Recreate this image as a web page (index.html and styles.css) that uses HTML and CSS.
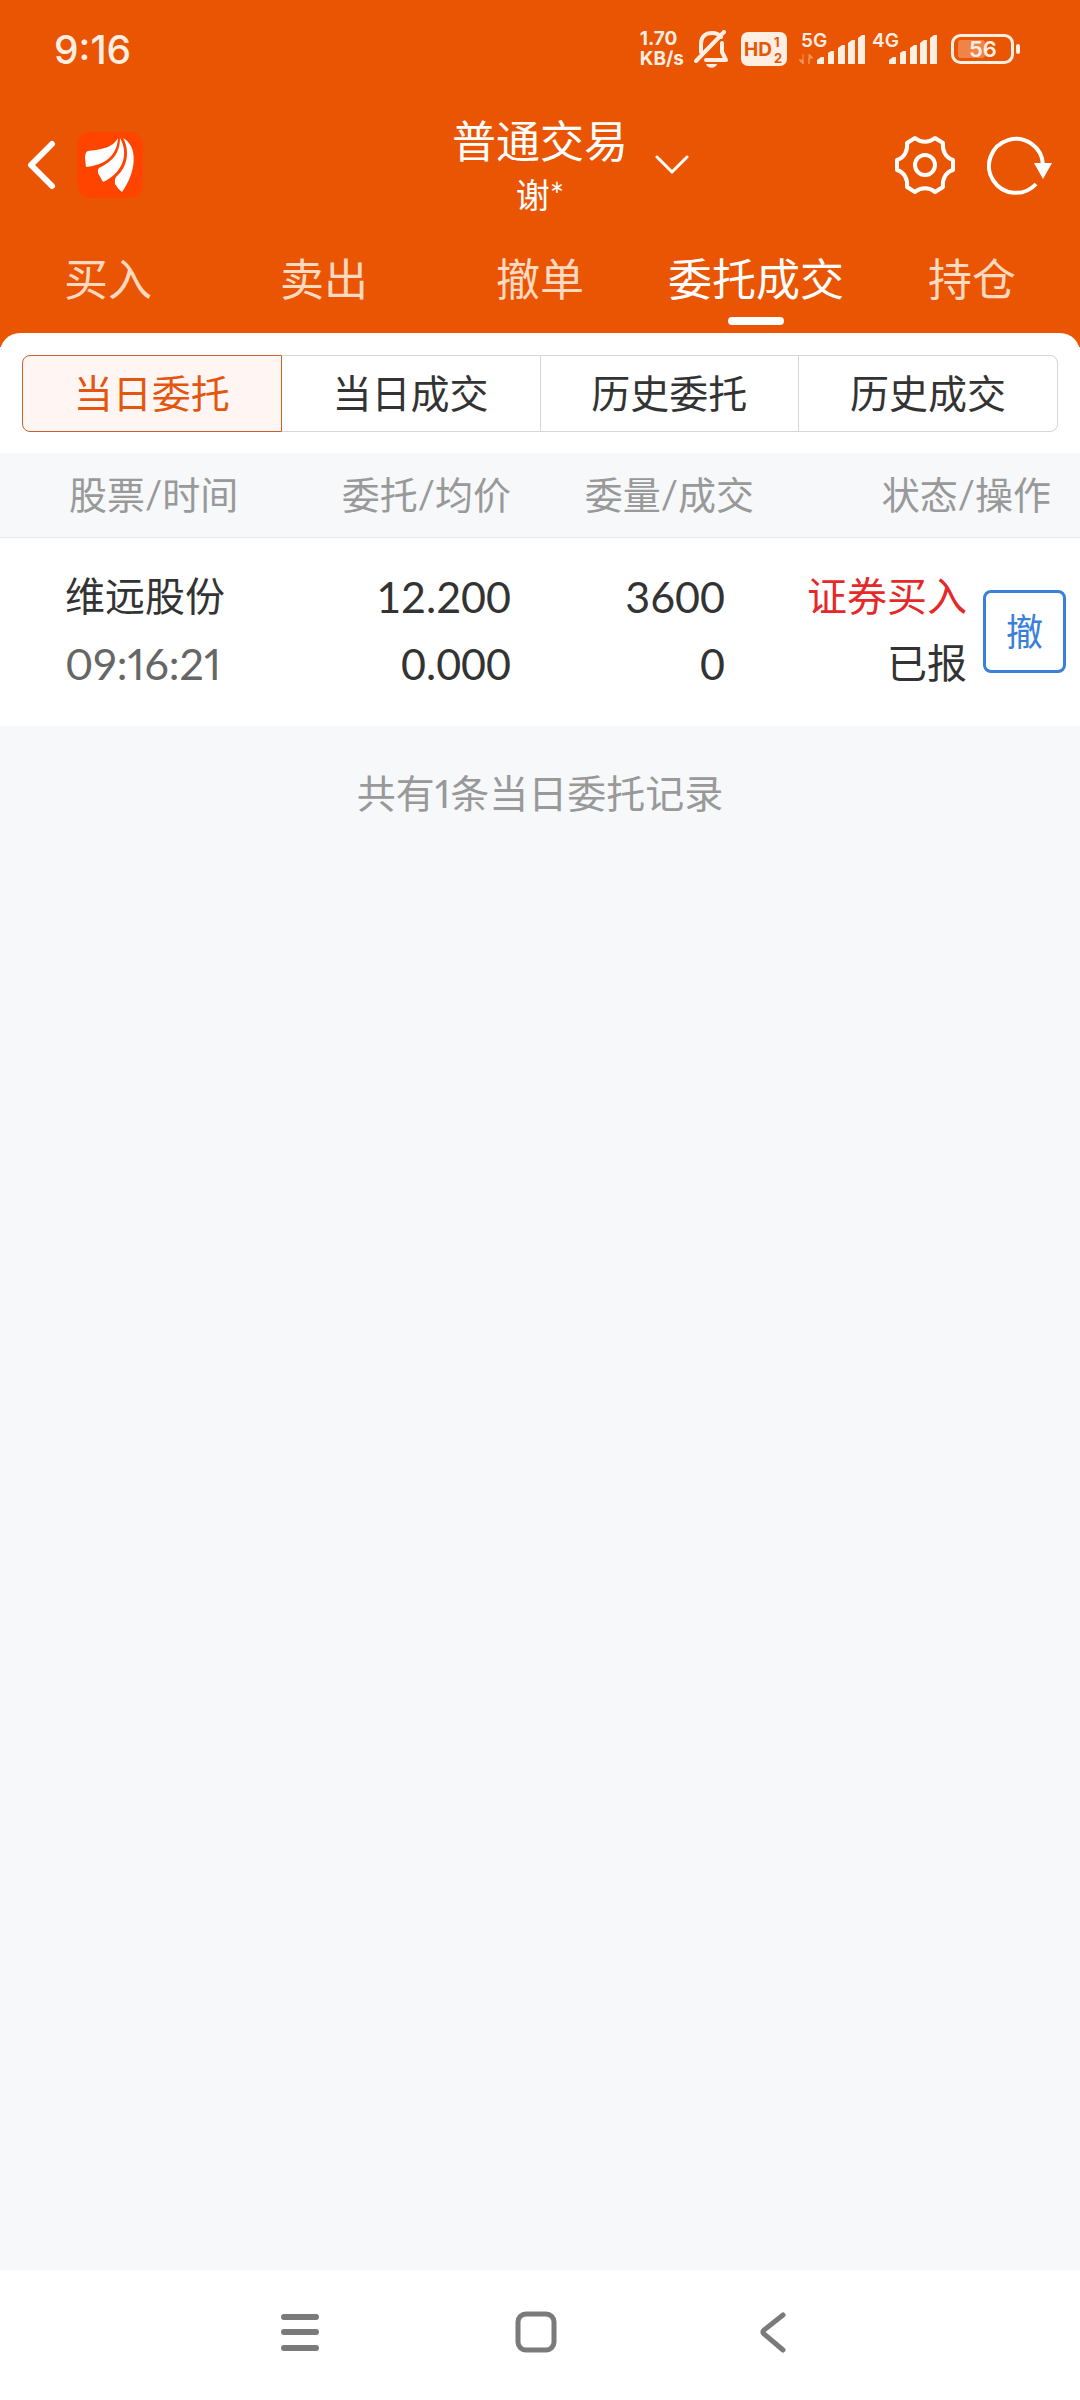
FILE: index.html
```html
<!DOCTYPE html>
<html lang="zh-CN">
<head>
  <meta charset="UTF-8" />
  <meta name="viewport" content="width=device-width, initial-scale=1.0" />
  <title>普通交易</title>
  <link rel="stylesheet" href="styles.css">
</head>
<body>

  <header class="top">
    <div class="status-bar">
      <span class="clock">9:16</span>
      <div class="status-icons">
        <div class="speed"><div>1.70</div><div>KB/s</div></div>
        <svg class="bell" width="34" height="38" viewBox="0 0 34 38" fill="none" stroke="currentColor" stroke-width="4">
          <path d="M7 22V14C7 6 12 3 18 3c4 0 7 1 9 4M28 13v9l4 8H12M2 31L30 2" stroke-linecap="round" stroke-linejoin="round"/>
          <path d="M12 34h11c-1 5-10 5-11 0z" fill="currentColor" stroke="none"/>
        </svg>
        <svg class="hd" width="46" height="34" viewBox="0 0 46 34">
          <rect width="46" height="34" rx="7" fill="currentColor"/>
          <text x="3" y="24" font-size="19">HD</text>
          <text x="33" y="15" font-size="13">1</text>
          <text x="33" y="31" font-size="13">2</text>
        </svg>
        <svg class="signal" width="66" height="46" viewBox="0 -6 66 46" fill="currentColor">
          <text x="2" y="15" font-size="19">5G</text>
          <path d="M4 22v10M4 32l-4-4h4zM10 32V22l4 4h-4z" stroke="currentColor" opacity=".4"/>
          <path d="M18 32v-4l4-3h3v7zM29 32V21l3-2h3v13zM39 32V16l4-3h3v19zM49 32V11l4-3h3v24zM59 32V6l4-3h3v29z"/>
        </svg>
        <svg class="signal" width="66" height="46" viewBox="0 -6 66 46" fill="currentColor">
          <text x="1" y="15" font-size="19">4G</text>
          <path d="M18 32v-4l4-3h3v7zM29 32V21l3-2h3v13zM39 32V16l4-3h3v19zM49 32V11l4-3h3v24zM59 32V6l4-3h3v29z"/>
        </svg>
        <svg class="battery" width="70" height="30" viewBox="0 0 70 30">
          <rect x="1.5" y="1.5" width="60" height="27" rx="8" fill="none" stroke="currentColor" stroke-width="3"/>
          <rect x="7" y="6" width="27" height="18" rx="3" fill="currentColor" opacity=".3"/>
          <rect x="65" y="10" width="4" height="10" rx="2" fill="currentColor"/>
          <text x="18" y="23" font-size="22" fill="currentColor">56</text>
        </svg>
      </div>
    </div>

    <div class="title-bar">
      <div class="title-left">
        <button class="icon-btn" aria-label="返回">
          <svg width="30" height="50" viewBox="0 0 30 50" fill="none" stroke="currentColor" stroke-width="6" stroke-linecap="round" stroke-linejoin="round">
            <path d="M25 4L4 25l21 21"/>
          </svg>
        </button>
        <svg width="66" height="66" viewBox="0 0 66 66">
          <rect width="66" height="66" rx="14" fill="#ff4400"/>
          <g fill="#fff">
            <path d="M41 6C36 14 30 17 11 19Q8 20 8 26L9 35C28 33 40 24 41 6Z"/>
            <path d="M43 6C43 20 37 29 22 36Q20 38 21 41L26 50C44 42 53 24 43 6Z"/>
            <path d="M46 6C53 18 51 35 39 45Q37 48 38 52Q41 57 45 60C60 39 61 14 46 6Z"/>
          </g>
        </svg>
      </div>
      <div class="title">
        <h1>普通交易</h1>
        <p>谢*</p>
      </div>
      <div class="title-right">
        <button class="icon-btn" aria-label="切换账户">
          <svg width="34" height="20" viewBox="0 0 34 20" fill="none" stroke="currentColor" stroke-width="3" stroke-linecap="round" stroke-linejoin="round">
            <path d="M2 2l15 15L32 2"/>
          </svg>
        </button>
        <div class="actions">
          <button class="icon-btn" aria-label="设置">
            <svg width="60" height="60" viewBox="0 0 60 60" fill="none" stroke="currentColor" stroke-width="4" stroke-linejoin="round">
              <path d="M20 3C26 8 34 8 40 3L48 8C47 16 51 23 58 25V35C51 37 47 44 48 52L40 57C34 52 26 52 20 57L12 52C13 44 9 37 2 35V25C9 23 13 16 12 8Z"/>
              <circle cx="30" cy="30" r="10"/>
            </svg>
          </button>
          <button class="icon-btn" aria-label="刷新">
            <svg width="66" height="60" viewBox="0 0 66 60" fill="none" stroke="currentColor" stroke-width="4">
              <path d="M56 30A27 27 0 1 0 49 49"/>
              <path d="M47 28h18l-9 16z" fill="currentColor" stroke="none"/>
            </svg>
          </button>
        </div>
      </div>
    </div>

    <nav class="tabs">
      <a href="#">买入</a>
      <a href="#">卖出</a>
      <a href="#">撤单</a>
      <a href="#" class="active">委托成交</a>
      <a href="#">持仓</a>
    </nav>
  </header>

  <main>
    <div class="panel">
      <div class="segments">
        <button class="active">当日委托</button>
        <button>当日成交</button>
        <button>历史委托</button>
        <button>历史成交</button>
      </div>
    </div>

    <table class="orders">
      <colgroup>
        <col class="col-name">
        <col class="col-price">
        <col class="col-qty">
        <col class="col-state">
        <col class="col-action">
      </colgroup>
      <thead>
        <tr>
          <th class="name">股票/时间</th>
          <th class="price">委托/均价</th>
          <th class="qty">委量/成交</th>
          <th class="state" colspan="2">状态/操作</th>
        </tr>
      </thead>
      <tbody>
        <tr>
          <td class="name"><div class="cjk">维远股份</div><div class="time">09:16:21</div></td>
          <td class="price"><div>12.200</div><div>0.000</div></td>
          <td class="qty"><div>3600</div><div>0</div></td>
          <td class="state"><div class="cjk buy">证券买入</div><div class="cjk">已报</div></td>
          <td class="action"><button class="cancel-btn">撤</button></td>
        </tr>
      </tbody>
    </table>

    <p class="summary">共有1条当日委托记录</p>
  </main>

  <footer class="system-nav">
    <button class="icon-btn" aria-label="菜单">
      <svg width="42" height="42" viewBox="0 0 42 42" fill="none" stroke="currentColor" stroke-width="6" stroke-linecap="round">
        <path d="M5 6h32M5 21h32M5 37h32"/>
      </svg>
    </button>
    <button class="icon-btn" aria-label="主页">
      <svg width="42" height="42" viewBox="0 0 42 42" fill="none" stroke="currentColor" stroke-width="5">
        <rect x="3" y="3" width="36" height="36" rx="8"/>
      </svg>
    </button>
    <button class="icon-btn" aria-label="返回">
      <svg width="42" height="42" viewBox="0 0 42 42" fill="none" stroke="currentColor" stroke-width="5" stroke-linecap="round">
        <path d="M32 4L13 19q-2 2 0 4L32 39"/>
      </svg>
    </button>
  </footer>

</body>
</html>
```
FILE: styles.css
```css
/* Global Styles */
* {
  box-sizing: border-box;
}
body {
  display: flex;
  flex-direction: column;
  min-height: 100vh;
  margin: 0;
  font-family: Lato, "Noto Sans CJK SC", sans-serif;
  background-color: #f6f8fa;
  color: #333;
}
h1, p {
  margin: 0;
  font-weight: 400;
}
button {
  font-family: inherit;
  cursor: pointer;
}
svg {
  display: block;
}
.icon-btn {
  padding: 0;
  border: none;
  background: none;
  color: inherit;
}

/* Header */
.top {
  background-color: #ea5504;
  color: #fff;
}
.status-bar {
  display: flex;
  justify-content: space-between;
  align-items: center;
  height: 98px;
  padding: 0 59px 0 54px;
  color: #ffeee2;
}
.clock {
  font-family: Inter, sans-serif;
  font-size: 39px;
  font-weight: 500;
}
.status-icons {
  display: flex;
  align-items: center;
  font-family: Inter, sans-serif;
}
.status-icons text {
  font-weight: 600;
}
.speed {
  font-size: 19px;
  font-weight: 700;
  line-height: 20px;
  margin-right: 10px;
}
.bell {
  margin-right: 13px;
}
.hd {
  margin-right: 12px;
}
.hd text {
  fill: #ea5504;
  font-weight: 700;
}
.signal {
  margin-right: 6px;
}
.signal + .battery {
  margin-left: 8px;
}

/* Title */
.title-bar {
  display: grid;
  grid-template-columns: 1fr auto 1fr;
  align-items: center;
  height: 134px;
}
.title-left {
  display: flex;
  align-items: center;
  gap: 20px;
  padding-left: 27px;
}
.title {
  text-align: center;
}
.title h1 {
  font-size: 44px;
  line-height: 60px;
}
.title p {
  font-size: 34px;
  line-height: 48px;
}
.title-right {
  display: flex;
  justify-content: space-between;
  align-items: center;
  padding: 0 27px;
}
.actions {
  display: flex;
  gap: 32px;
}

/* Tabs */
.tabs {
  display: flex;
}
.tabs a {
  flex: 1;
  display: flex;
  flex-direction: column;
  align-items: center;
  height: 101px;
  padding-top: 15px;
  color: #ffd9c0;
  font-size: 44px;
  line-height: 64px;
  text-decoration: none;
}
.tabs .active {
  color: #fff;
}
.tabs .active::after {
  content: "";
  width: 56px;
  height: 8px;
  margin-top: 6px;
  border-radius: 4px;
  background-color: #fff;
}

/* Segments */
main {
  flex: 1;
  background: linear-gradient(#ea5504 14px, #fff 14px, #fff 40px, #f6f8fa 40px);
}
.panel {
  padding: 22px 22px 21px;
  background-color: #fff;
  border-radius: 20px 20px 0 0;
}
.segments {
  display: flex;
}
.segments button {
  flex: 1;
  height: 77px;
  padding: 0 0 5px;
  border: 1px solid #d5d8da;
  border-left-width: 0;
  background-color: #fff;
  color: #333;
  font-size: 39px;
}
.segments button:first-child {
  border-left-width: 1px;
  border-radius: 8px 0 0 8px;
}
.segments button:last-child {
  border-radius: 0 8px 8px 0;
}
.segments .active {
  border-color: #c8602c;
  background-color: #fff5f2;
  color: #e2560f;
}

/* Orders */
.orders {
  width: 100%;
  table-layout: fixed;
  border-collapse: collapse;
  background-color: #fff;
}
.col-name, .col-price {
  width: 25%;
}
.col-qty, .col-state {
  width: 20%;
}
.col-action {
  width: 10%;
}
.orders th {
  height: 84px;
  padding: 0 0 4px;
  border-bottom: 1px solid #ebebeb;
  background-color: #f6f8fa;
  color: #999;
  font-size: 38px;
  font-weight: 400;
  text-align: right;
}
.orders td {
  padding: 25px 0 29px;
  font-size: 43px;
  line-height: 67px;
  text-align: right;
}
.orders .cjk {
  font-size: 40px;
}
.orders th.name {
  padding-left: 69px;
  text-align: left;
}
.orders td.name {
  padding-left: 65px;
  text-align: left;
}
.orders .price {
  padding-right: 29px;
}
.orders th.qty {
  padding-right: 2px;
}
.orders td.qty {
  padding-right: 31px;
}
.orders th.state {
  padding-right: 29px;
}
.orders td.state {
  padding-right: 5px;
}
.orders td.action {
  padding: 0 14px 0 0;
}
.time {
  color: #666;
  font-variant-numeric: proportional-nums;
}
.buy {
  color: #e62828;
}
.cancel-btn {
  width: 83px;
  height: 83px;
  padding: 0 0 4px;
  border: 3px solid #3a7fd9;
  border-radius: 8px;
  background-color: #fff;
  color: #3a7fd9;
  font-size: 37px;
}
.summary {
  padding-top: 37px;
  color: #999;
  font-size: 39px;
  font-variant-numeric: proportional-nums;
  line-height: 60px;
  text-align: center;
}

/* System navigation */
.system-nav {
  display: flex;
  justify-content: center;
  align-items: center;
  gap: 194px;
  height: 130px;
  padding: 0 8px 6px 0;
  background-color: #fff;
  color: #7a7a7a;
}
```
